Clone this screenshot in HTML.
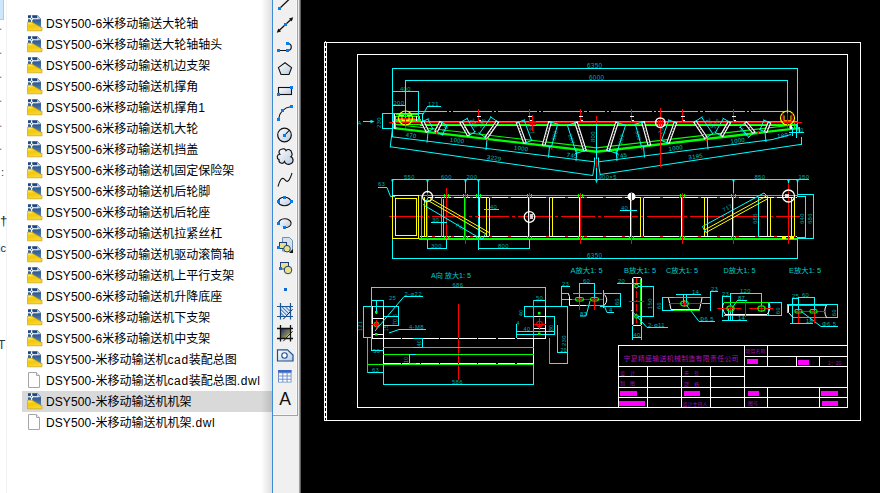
<!DOCTYPE html>
<html lang="zh-CN">
<head>
<meta charset="utf-8">
<title>DSY500</title>
<style>
html,body{margin:0;padding:0;}
body{width:880px;height:493px;overflow:hidden;background:#fff;position:relative;font-family:"Liberation Sans","Noto Sans CJK SC",sans-serif;}
#left{position:absolute;left:0;top:0;width:272px;height:493px;background:#fff;overflow:hidden;}
#navsel{position:absolute;left:0;top:0;width:3px;height:19px;background:#cce8ff;border-right:1px solid #99d1ff;border-bottom:1px solid #99d1ff;}
#navline{position:absolute;left:6px;top:0;width:1px;height:493px;background:#f2f2f2;}
.row{position:absolute;left:22px;width:250px;height:21px;}
.row.sel{background:#d9d9d9;}
.row span{position:absolute;left:24px;top:1px;line-height:21px;font-size:12px;color:#000;white-space:nowrap;}
.row span i{font-style:normal;font-size:12px;letter-spacing:0.1px;}
.row span i.lc{letter-spacing:0.65px;}
.row svg{position:absolute;left:5px;top:2px;}
#shadow{position:absolute;left:261px;top:0;width:11px;height:493px;background:linear-gradient(to right,rgba(0,0,0,0),rgba(0,0,0,0.13));}
#tb{position:absolute;left:272px;top:0;width:29px;height:493px;background:#f0f0f0;}
#tb .bl{position:absolute;left:0;top:0;width:1px;height:493px;background:#3c8ad8;}
#tb .r0{position:absolute;left:24px;top:0;width:1px;height:415px;background:#f8f8f8;}
#tb .r1{position:absolute;left:25px;top:0;width:1px;height:416px;background:#a2a2a2;}
#tb .b0{position:absolute;left:1px;top:414px;width:24px;height:1px;background:#f8f8f8;}
#tb .b1{position:absolute;left:1px;top:415px;width:25px;height:1px;background:#a2a2a2;}
#tb .r2{position:absolute;left:26px;top:0;width:1px;height:493px;background:#ececec;}
#tb .r3{position:absolute;left:27px;top:0;width:1px;height:493px;background:#a0a0a0;}
#tb .r4{position:absolute;left:28px;top:0;width:1px;height:493px;background:#606060;}
#cad{position:absolute;left:301px;top:0;width:579px;height:493px;background:#000;}
#cadsvg{position:absolute;left:0;top:0;pointer-events:none;}
.nt{position:absolute;left:0;font-size:12px;color:#444;line-height:12px;white-space:nowrap;}
</style>
</head>
<body>
<div id="left">
<div id="navsel"></div>
<div id="navline"></div>
<span class="nt" style="left:-1px;top:19.5px;color:#777">.</span>
<span class="nt" style="left:-1px;top:44.0px;color:#777">.</span>
<span class="nt" style="left:-1px;top:68.0px;color:#777">.</span>
<span class="nt" style="left:-1px;top:92.0px;color:#777">.</span>
<span class="nt" style="left:-1px;top:116.5px;color:#777">.</span>
<span class="nt" style="left:-1px;top:139.5px;color:#777">.</span>
<span class="nt" style="left:1px;top:166px;color:#333;font-size:11px">:</span>
<span class="nt" style="left:0px;top:215px;color:#222;font-size:13px">†</span>
<span class="nt" style="left:-2px;top:242px;color:#224;font-size:11px">ic</span>
<span class="nt" style="left:-2px;top:339px;color:#333;font-size:12px">T</span>
<svg width="0" height="0" style="position:absolute"><defs><linearGradient id="pg" x1="0" y1="0" x2="0" y2="1"><stop offset="0" stop-color="#173f78"/><stop offset="1" stop-color="#5c88bb"/></linearGradient><linearGradient id="fg" x1="0" y1="0" x2="0.3" y2="1"><stop offset="0" stop-color="#fbe24a"/><stop offset="0.5" stop-color="#f2c80a"/><stop offset="1" stop-color="#f7d634"/></linearGradient></defs></svg>
<div class="row" style="top:13px"><svg width="16" height="17" viewBox="0 0 16 17"><path d="M1 0.2H10.5L14 3.8V13H1Z" fill="url(#pg)"/><path d="M10.2 0.2L14 4.2H10.2Z" fill="#b9cde0"/><path d="M1 3.2H10.8V4.3H1Z" fill="#fff"/><path d="M4 0.2H5.2V7.5H4Z" fill="#fff"/><circle cx="4.600" cy="3.700" r="1.500" fill="#fff"/><circle cx="4.600" cy="3.700" r="0.600" fill="#24508a"/><path d="M0.3 7.2H5L13.6 12.2H15V15.8H0.3Z" fill="url(#fg)" stroke="#cfa106" stroke-width="0.7"/><path d="M1 8.2H4.5" stroke="#fdf0a0" stroke-width="0.8"/></svg><span><i>DSY500-6</i>米移动输送大轮轴</span></div>
<div class="row" style="top:34px"><svg width="16" height="17" viewBox="0 0 16 17"><path d="M1 0.2H10.5L14 3.8V13H1Z" fill="url(#pg)"/><path d="M10.2 0.2L14 4.2H10.2Z" fill="#b9cde0"/><path d="M1 3.2H10.8V4.3H1Z" fill="#fff"/><path d="M4 0.2H5.2V7.5H4Z" fill="#fff"/><circle cx="4.600" cy="3.700" r="1.500" fill="#fff"/><circle cx="4.600" cy="3.700" r="0.600" fill="#24508a"/><path d="M0.3 7.2H5L13.6 12.2H15V15.8H0.3Z" fill="url(#fg)" stroke="#cfa106" stroke-width="0.7"/><path d="M1 8.2H4.5" stroke="#fdf0a0" stroke-width="0.8"/></svg><span><i>DSY500-6</i>米移动输送大轮轴轴头</span></div>
<div class="row" style="top:55px"><svg width="16" height="17" viewBox="0 0 16 17"><path d="M1 0.2H10.5L14 3.8V13H1Z" fill="url(#pg)"/><path d="M10.2 0.2L14 4.2H10.2Z" fill="#b9cde0"/><path d="M1 3.2H10.8V4.3H1Z" fill="#fff"/><path d="M4 0.2H5.2V7.5H4Z" fill="#fff"/><circle cx="4.600" cy="3.700" r="1.500" fill="#fff"/><circle cx="4.600" cy="3.700" r="0.600" fill="#24508a"/><path d="M0.3 7.2H5L13.6 12.2H15V15.8H0.3Z" fill="url(#fg)" stroke="#cfa106" stroke-width="0.7"/><path d="M1 8.2H4.5" stroke="#fdf0a0" stroke-width="0.8"/></svg><span><i>DSY500-6</i>米移动输送机边支架</span></div>
<div class="row" style="top:76px"><svg width="16" height="17" viewBox="0 0 16 17"><path d="M1 0.2H10.5L14 3.8V13H1Z" fill="url(#pg)"/><path d="M10.2 0.2L14 4.2H10.2Z" fill="#b9cde0"/><path d="M1 3.2H10.8V4.3H1Z" fill="#fff"/><path d="M4 0.2H5.2V7.5H4Z" fill="#fff"/><circle cx="4.600" cy="3.700" r="1.500" fill="#fff"/><circle cx="4.600" cy="3.700" r="0.600" fill="#24508a"/><path d="M0.3 7.2H5L13.6 12.2H15V15.8H0.3Z" fill="url(#fg)" stroke="#cfa106" stroke-width="0.7"/><path d="M1 8.2H4.5" stroke="#fdf0a0" stroke-width="0.8"/></svg><span><i>DSY500-6</i>米移动输送机撑角</span></div>
<div class="row" style="top:97px"><svg width="16" height="17" viewBox="0 0 16 17"><path d="M1 0.2H10.5L14 3.8V13H1Z" fill="url(#pg)"/><path d="M10.2 0.2L14 4.2H10.2Z" fill="#b9cde0"/><path d="M1 3.2H10.8V4.3H1Z" fill="#fff"/><path d="M4 0.2H5.2V7.5H4Z" fill="#fff"/><circle cx="4.600" cy="3.700" r="1.500" fill="#fff"/><circle cx="4.600" cy="3.700" r="0.600" fill="#24508a"/><path d="M0.3 7.2H5L13.6 12.2H15V15.8H0.3Z" fill="url(#fg)" stroke="#cfa106" stroke-width="0.7"/><path d="M1 8.2H4.5" stroke="#fdf0a0" stroke-width="0.8"/></svg><span><i>DSY500-6</i>米移动输送机撑角<i>1</i></span></div>
<div class="row" style="top:118px"><svg width="16" height="17" viewBox="0 0 16 17"><path d="M1 0.2H10.5L14 3.8V13H1Z" fill="url(#pg)"/><path d="M10.2 0.2L14 4.2H10.2Z" fill="#b9cde0"/><path d="M1 3.2H10.8V4.3H1Z" fill="#fff"/><path d="M4 0.2H5.2V7.5H4Z" fill="#fff"/><circle cx="4.600" cy="3.700" r="1.500" fill="#fff"/><circle cx="4.600" cy="3.700" r="0.600" fill="#24508a"/><path d="M0.3 7.2H5L13.6 12.2H15V15.8H0.3Z" fill="url(#fg)" stroke="#cfa106" stroke-width="0.7"/><path d="M1 8.2H4.5" stroke="#fdf0a0" stroke-width="0.8"/></svg><span><i>DSY500-6</i>米移动输送机大轮</span></div>
<div class="row" style="top:139px"><svg width="16" height="17" viewBox="0 0 16 17"><path d="M1 0.2H10.5L14 3.8V13H1Z" fill="url(#pg)"/><path d="M10.2 0.2L14 4.2H10.2Z" fill="#b9cde0"/><path d="M1 3.2H10.8V4.3H1Z" fill="#fff"/><path d="M4 0.2H5.2V7.5H4Z" fill="#fff"/><circle cx="4.600" cy="3.700" r="1.500" fill="#fff"/><circle cx="4.600" cy="3.700" r="0.600" fill="#24508a"/><path d="M0.3 7.2H5L13.6 12.2H15V15.8H0.3Z" fill="url(#fg)" stroke="#cfa106" stroke-width="0.7"/><path d="M1 8.2H4.5" stroke="#fdf0a0" stroke-width="0.8"/></svg><span><i>DSY500-6</i>米移动输送机挡盖</span></div>
<div class="row" style="top:160px"><svg width="16" height="17" viewBox="0 0 16 17"><path d="M1 0.2H10.5L14 3.8V13H1Z" fill="url(#pg)"/><path d="M10.2 0.2L14 4.2H10.2Z" fill="#b9cde0"/><path d="M1 3.2H10.8V4.3H1Z" fill="#fff"/><path d="M4 0.2H5.2V7.5H4Z" fill="#fff"/><circle cx="4.600" cy="3.700" r="1.500" fill="#fff"/><circle cx="4.600" cy="3.700" r="0.600" fill="#24508a"/><path d="M0.3 7.2H5L13.6 12.2H15V15.8H0.3Z" fill="url(#fg)" stroke="#cfa106" stroke-width="0.7"/><path d="M1 8.2H4.5" stroke="#fdf0a0" stroke-width="0.8"/></svg><span><i>DSY500-6</i>米移动输送机固定保险架</span></div>
<div class="row" style="top:181px"><svg width="16" height="17" viewBox="0 0 16 17"><path d="M1 0.2H10.5L14 3.8V13H1Z" fill="url(#pg)"/><path d="M10.2 0.2L14 4.2H10.2Z" fill="#b9cde0"/><path d="M1 3.2H10.8V4.3H1Z" fill="#fff"/><path d="M4 0.2H5.2V7.5H4Z" fill="#fff"/><circle cx="4.600" cy="3.700" r="1.500" fill="#fff"/><circle cx="4.600" cy="3.700" r="0.600" fill="#24508a"/><path d="M0.3 7.2H5L13.6 12.2H15V15.8H0.3Z" fill="url(#fg)" stroke="#cfa106" stroke-width="0.7"/><path d="M1 8.2H4.5" stroke="#fdf0a0" stroke-width="0.8"/></svg><span><i>DSY500-6</i>米移动输送机后轮脚</span></div>
<div class="row" style="top:202px"><svg width="16" height="17" viewBox="0 0 16 17"><path d="M1 0.2H10.5L14 3.8V13H1Z" fill="url(#pg)"/><path d="M10.2 0.2L14 4.2H10.2Z" fill="#b9cde0"/><path d="M1 3.2H10.8V4.3H1Z" fill="#fff"/><path d="M4 0.2H5.2V7.5H4Z" fill="#fff"/><circle cx="4.600" cy="3.700" r="1.500" fill="#fff"/><circle cx="4.600" cy="3.700" r="0.600" fill="#24508a"/><path d="M0.3 7.2H5L13.6 12.2H15V15.8H0.3Z" fill="url(#fg)" stroke="#cfa106" stroke-width="0.7"/><path d="M1 8.2H4.5" stroke="#fdf0a0" stroke-width="0.8"/></svg><span><i>DSY500-6</i>米移动输送机后轮座</span></div>
<div class="row" style="top:223px"><svg width="16" height="17" viewBox="0 0 16 17"><path d="M1 0.2H10.5L14 3.8V13H1Z" fill="url(#pg)"/><path d="M10.2 0.2L14 4.2H10.2Z" fill="#b9cde0"/><path d="M1 3.2H10.8V4.3H1Z" fill="#fff"/><path d="M4 0.2H5.2V7.5H4Z" fill="#fff"/><circle cx="4.600" cy="3.700" r="1.500" fill="#fff"/><circle cx="4.600" cy="3.700" r="0.600" fill="#24508a"/><path d="M0.3 7.2H5L13.6 12.2H15V15.8H0.3Z" fill="url(#fg)" stroke="#cfa106" stroke-width="0.7"/><path d="M1 8.2H4.5" stroke="#fdf0a0" stroke-width="0.8"/></svg><span><i>DSY500-6</i>米移动输送机拉紧丝杠</span></div>
<div class="row" style="top:244px"><svg width="16" height="17" viewBox="0 0 16 17"><path d="M1 0.2H10.5L14 3.8V13H1Z" fill="url(#pg)"/><path d="M10.2 0.2L14 4.2H10.2Z" fill="#b9cde0"/><path d="M1 3.2H10.8V4.3H1Z" fill="#fff"/><path d="M4 0.2H5.2V7.5H4Z" fill="#fff"/><circle cx="4.600" cy="3.700" r="1.500" fill="#fff"/><circle cx="4.600" cy="3.700" r="0.600" fill="#24508a"/><path d="M0.3 7.2H5L13.6 12.2H15V15.8H0.3Z" fill="url(#fg)" stroke="#cfa106" stroke-width="0.7"/><path d="M1 8.2H4.5" stroke="#fdf0a0" stroke-width="0.8"/></svg><span><i>DSY500-6</i>米移动输送机驱动滚筒轴</span></div>
<div class="row" style="top:265px"><svg width="16" height="17" viewBox="0 0 16 17"><path d="M1 0.2H10.5L14 3.8V13H1Z" fill="url(#pg)"/><path d="M10.2 0.2L14 4.2H10.2Z" fill="#b9cde0"/><path d="M1 3.2H10.8V4.3H1Z" fill="#fff"/><path d="M4 0.2H5.2V7.5H4Z" fill="#fff"/><circle cx="4.600" cy="3.700" r="1.500" fill="#fff"/><circle cx="4.600" cy="3.700" r="0.600" fill="#24508a"/><path d="M0.3 7.2H5L13.6 12.2H15V15.8H0.3Z" fill="url(#fg)" stroke="#cfa106" stroke-width="0.7"/><path d="M1 8.2H4.5" stroke="#fdf0a0" stroke-width="0.8"/></svg><span><i>DSY500-6</i>米移动输送机上平行支架</span></div>
<div class="row" style="top:286px"><svg width="16" height="17" viewBox="0 0 16 17"><path d="M1 0.2H10.5L14 3.8V13H1Z" fill="url(#pg)"/><path d="M10.2 0.2L14 4.2H10.2Z" fill="#b9cde0"/><path d="M1 3.2H10.8V4.3H1Z" fill="#fff"/><path d="M4 0.2H5.2V7.5H4Z" fill="#fff"/><circle cx="4.600" cy="3.700" r="1.500" fill="#fff"/><circle cx="4.600" cy="3.700" r="0.600" fill="#24508a"/><path d="M0.3 7.2H5L13.6 12.2H15V15.8H0.3Z" fill="url(#fg)" stroke="#cfa106" stroke-width="0.7"/><path d="M1 8.2H4.5" stroke="#fdf0a0" stroke-width="0.8"/></svg><span><i>DSY500-6</i>米移动输送机升降底座</span></div>
<div class="row" style="top:307px"><svg width="16" height="17" viewBox="0 0 16 17"><path d="M1 0.2H10.5L14 3.8V13H1Z" fill="url(#pg)"/><path d="M10.2 0.2L14 4.2H10.2Z" fill="#b9cde0"/><path d="M1 3.2H10.8V4.3H1Z" fill="#fff"/><path d="M4 0.2H5.2V7.5H4Z" fill="#fff"/><circle cx="4.600" cy="3.700" r="1.500" fill="#fff"/><circle cx="4.600" cy="3.700" r="0.600" fill="#24508a"/><path d="M0.3 7.2H5L13.6 12.2H15V15.8H0.3Z" fill="url(#fg)" stroke="#cfa106" stroke-width="0.7"/><path d="M1 8.2H4.5" stroke="#fdf0a0" stroke-width="0.8"/></svg><span><i>DSY500-6</i>米移动输送机下支架</span></div>
<div class="row" style="top:328px"><svg width="16" height="17" viewBox="0 0 16 17"><path d="M1 0.2H10.5L14 3.8V13H1Z" fill="url(#pg)"/><path d="M10.2 0.2L14 4.2H10.2Z" fill="#b9cde0"/><path d="M1 3.2H10.8V4.3H1Z" fill="#fff"/><path d="M4 0.2H5.2V7.5H4Z" fill="#fff"/><circle cx="4.600" cy="3.700" r="1.500" fill="#fff"/><circle cx="4.600" cy="3.700" r="0.600" fill="#24508a"/><path d="M0.3 7.2H5L13.6 12.2H15V15.8H0.3Z" fill="url(#fg)" stroke="#cfa106" stroke-width="0.7"/><path d="M1 8.2H4.5" stroke="#fdf0a0" stroke-width="0.8"/></svg><span><i>DSY500-6</i>米移动输送机中支架</span></div>
<div class="row" style="top:349px"><svg width="16" height="17" viewBox="0 0 16 17"><path d="M1 0.2H10.5L14 3.8V13H1Z" fill="url(#pg)"/><path d="M10.2 0.2L14 4.2H10.2Z" fill="#b9cde0"/><path d="M1 3.2H10.8V4.3H1Z" fill="#fff"/><path d="M4 0.2H5.2V7.5H4Z" fill="#fff"/><circle cx="4.600" cy="3.700" r="1.500" fill="#fff"/><circle cx="4.600" cy="3.700" r="0.600" fill="#24508a"/><path d="M0.3 7.2H5L13.6 12.2H15V15.8H0.3Z" fill="url(#fg)" stroke="#cfa106" stroke-width="0.7"/><path d="M1 8.2H4.5" stroke="#fdf0a0" stroke-width="0.8"/></svg><span><i>DSY500-</i>米移动输送机<i class="lc">cad</i>装配总图</span></div>
<div class="row" style="top:370px"><svg width="16" height="17" viewBox="0 0 16 17"><path d="M1.5 0.5H9.5L12.5 3.5V15.5H1.5Z" fill="#fdfdfd" stroke="#a6a6a6" stroke-width="1"/><path d="M9.5 0.5V3.5H12.5" fill="#f0f0f0" stroke="#a6a6a6" stroke-width="1"/></svg><span><i>DSY500-</i>米移动输送机<i class="lc">cad</i>装配总图<i class="lc">.dwl</i></span></div>
<div class="row sel" style="top:391px"><svg width="16" height="17" viewBox="0 0 16 17"><path d="M1 0.2H10.5L14 3.8V13H1Z" fill="url(#pg)"/><path d="M10.2 0.2L14 4.2H10.2Z" fill="#b9cde0"/><path d="M1 3.2H10.8V4.3H1Z" fill="#fff"/><path d="M4 0.2H5.2V7.5H4Z" fill="#fff"/><circle cx="4.600" cy="3.700" r="1.500" fill="#fff"/><circle cx="4.600" cy="3.700" r="0.600" fill="#24508a"/><path d="M0.3 7.2H5L13.6 12.2H15V15.8H0.3Z" fill="url(#fg)" stroke="#cfa106" stroke-width="0.7"/><path d="M1 8.2H4.5" stroke="#fdf0a0" stroke-width="0.8"/></svg><span><i>DSY500-</i>米移动输送机机架</span></div>
<div class="row" style="top:412px"><svg width="16" height="17" viewBox="0 0 16 17"><path d="M1.5 0.5H9.5L12.5 3.5V15.5H1.5Z" fill="#fdfdfd" stroke="#a6a6a6" stroke-width="1"/><path d="M9.5 0.5V3.5H12.5" fill="#f0f0f0" stroke="#a6a6a6" stroke-width="1"/></svg><span><i>DSY500-</i>米移动输送机机架<i class="lc">.dwl</i></span></div>
<div id="shadow"></div>
</div>
<div id="tb"><div class="bl"></div><div class="r0"></div><div class="r1"></div><div class="r2"></div><div class="r3"></div><div class="r4"></div><div class="b0"></div><div class="b1"></div>
<svg width="29" height="493" viewBox="272 0 29 493" style="position:absolute;left:0;top:0">
<defs>
<linearGradient id="lg1" x1="0" y1="0" x2="1" y2="1"><stop offset="0" stop-color="#ffffff"/><stop offset="1" stop-color="#b8cbe0"/></linearGradient>
<linearGradient id="lg2" x1="0" y1="0" x2="1" y2="1"><stop offset="0" stop-color="#1d2f78"/><stop offset="1" stop-color="#c9bb3c"/></linearGradient>
<pattern id="hat" width="2.600" height="3" patternUnits="userSpaceOnUse" patternTransform="rotate(-45)"><rect width="3" height="3" fill="#fff"/><rect width="1.200" height="3" fill="#3f7cc4"/></pattern>
</defs>
<g fill="#0a78e6" id="sq"></g>
<!-- line -->
<path d="M279.5 8.5L289.5 -1" stroke="#111" stroke-width="1.3" fill="none"/>
<rect x="278" y="7" width="3" height="3" fill="#0b7ae8"/>
<!-- xline -->
<path d="M278 31.5L292 18.5" stroke="#111" stroke-width="1.3" fill="none"/>
<path d="M276.8 32.8L278.3 28.6L281 31.4Z M293.2 17.2L291.7 21.4L289 18.6Z" fill="#111"/>
<rect x="284" y="23" width="3" height="3" fill="#0b7ae8"/>
<!-- polyline -->
<path d="M278.5 50.5H287.5C292.5 50.5 292.5 43.5 287.5 43.5" stroke="#111" stroke-width="1.2" fill="none"/>
<rect x="277" y="49" width="3" height="3" fill="#0b7ae8"/><rect x="286" y="49" width="3" height="3" fill="#0b7ae8"/><rect x="286" y="42" width="3" height="3" fill="#0b7ae8"/>
<!-- pentagon -->
<path d="M285 62.7L291.6 67.6L289 74.5H281L278.4 67.6Z" fill="url(#lg1)" stroke="#111" stroke-width="1.1"/>
<!-- rect -->
<rect x="278.5" y="87.5" width="13" height="7" fill="url(#lg1)" stroke="#111" stroke-width="1.1"/>
<rect x="290" y="86" width="3" height="3" fill="#0b7ae8"/><rect x="277" y="93" width="3" height="3" fill="#0b7ae8"/>
<!-- arc -->
<path d="M278.5 119.5C279.5 112 284 107.5 291.5 106.5" stroke="#111" stroke-width="1.2" fill="none"/>
<rect x="277" y="118" width="3" height="3" fill="#0b7ae8"/><rect x="281" y="109" width="3" height="3" fill="#0b7ae8"/><rect x="290" y="105" width="3" height="3" fill="#0b7ae8"/>
<!-- circle -->
<circle cx="284.5" cy="135" r="6.8" fill="url(#lg1)" stroke="#111" stroke-width="1.2"/>
<path d="M284.5 135.5L289.5 130" stroke="#111" stroke-width="1.1"/>
<rect x="283" y="134" width="3" height="3" fill="#0b7ae8"/>
<!-- cloud -->
<path d="M279.8 154.2A2.900 2.900 0 0 1 281.500 149.300A3 3 0 0 1 286 150.600A3.200 3.200 0 0 1 291.600 152.600A3 3 0 0 1 290.800 156.800A3.800 3.800 0 0 1 290 164A3.800 3.800 0 0 1 284.600 161.600A3 3 0 0 1 279 159.600A2.800 2.800 0 0 1 279.800 154.200Z" fill="url(#lg1)" stroke="#111" stroke-width="1.15"/>
<!-- spline -->
<path d="M278 186.5C279.5 181 281.5 177.500 283.500 178.500C285.500 179.500 286 182.500 288 181C290 179.500 291 176 292 173" stroke="#111" stroke-width="1.1" fill="none"/>
<!-- ellipse -->
<ellipse cx="284.5" cy="201.500" rx="6.3" ry="4.3" fill="url(#lg1)" stroke="#111" stroke-width="1.1"/>
<rect x="283" y="196" width="3" height="3" fill="#0b7ae8"/><rect x="277" y="200" width="3" height="3" fill="#0b7ae8"/><rect x="290" y="200" width="3" height="3" fill="#0b7ae8"/>
<!-- ellipse arc -->
<ellipse cx="284.5" cy="223.3" rx="6" ry="4.3" fill="url(#lg1)"/>
<path d="M278.5 223.5A6.300 4.500 0 1 1 285 227.800" stroke="#111" stroke-width="1.1" fill="none"/>
<rect x="277" y="222" width="3" height="3" fill="#0b7ae8"/><rect x="283" y="226" width="3" height="3" fill="#0b7ae8"/>
<!-- insert block -->
<path d="M282.500 237.500H289.500L292.500 240.500V251H282.500Z" fill="#d5e2ec" stroke="#6d8fb3" stroke-width="1"/>
<rect x="279.500" y="242.500" width="7" height="6" fill="#e9e188" stroke="#1f3f7a" stroke-width="1"/>
<circle cx="287" cy="248.700" r="3.300" fill="#e9e188" stroke="#1f3f7a" stroke-width="1"/>
<rect x="277" y="246" width="3" height="3" fill="#0b7ae8"/>
<path d="M293 249V253H289Z" fill="#111"/>
<!-- make block -->
<rect x="280.500" y="262.500" width="8" height="6.500" fill="#e9e188" stroke="#1f3f7a" stroke-width="1"/>
<circle cx="288" cy="270" r="3.800" fill="#e9e188" stroke="#1f3f7a" stroke-width="1"/>
<rect x="279" y="267" width="3" height="3" fill="#0b7ae8"/>
<!-- point -->
<rect x="284" y="288" width="3" height="3" fill="#0b6ad8"/>
<!-- hatch -->
<path d="M281 306.500H290.500V310.500L284.500 317H281Z" fill="url(#hat)"/>
<path d="M283.300 319.200L292.500 309.300" stroke="#111" stroke-width="1"/>
<path d="M277 306.500H293M277 316.500H293M280.500 303V319.500M290.500 303V319.500" stroke="#1c5596" stroke-width="1.2" fill="none"/>
<!-- gradient -->
<path d="M281 328.500H290.500V332.500L284.500 339H281Z" fill="url(#lg2)"/>
<path d="M283.300 341.200L292.500 331.300" stroke="#111" stroke-width="1"/>
<path d="M277 328.500H293M277 338.500H293M280.500 325V341.500M290.500 325V341.500" stroke="#111" stroke-width="1.3" fill="none"/>
<!-- region -->
<path d="M277.500 349.800H287.500L293 355V361H277.500Z" fill="url(#lg1)" stroke="#1f4f92" stroke-width="1.2"/>
<circle cx="284.500" cy="355.500" r="2.700" fill="#fff" stroke="#1f4f92" stroke-width="1.1"/>
<!-- table -->
<rect x="278" y="370" width="13.500" height="12.500" fill="#6f8fc8"/>
<rect x="278" y="370" width="13.500" height="2.300" fill="#3a68c8"/>
<g fill="#fff"><rect x="279" y="373.300" width="3.300" height="2.200"/><rect x="283.300" y="373.300" width="3.300" height="2.200"/><rect x="287.600" y="373.300" width="3" height="2.200"/><rect x="279" y="376.500" width="3.300" height="2.200"/><rect x="283.300" y="376.500" width="3.300" height="2.200"/><rect x="287.600" y="376.500" width="3" height="2.200"/><rect x="279" y="379.700" width="3.300" height="2"/><rect x="283.300" y="379.700" width="3.300" height="2"/><rect x="287.600" y="379.700" width="3" height="2"/></g>
<!-- A -->
<text x="285.200" y="405" font-family="Liberation Sans,sans-serif" font-size="17.500" text-anchor="middle" fill="#111">A</text>
</svg>

</div>
<div id="cad"></div>
<svg id="cadsvg" width="880" height="493" viewBox="0 0 880 493">
<rect x="324" y="42" width="3" height="379" fill="#fff"/>
<path d="M325.5 43V420" stroke="#000" stroke-width="1" stroke-dasharray="3 2" shape-rendering="crispEdges"/>
<rect x="325" y="41" width="1" height="1" fill="#ddd"/>
<path d="M326 42.5H861M860.5 42V421M324 420.5H861" stroke="#ffffff" stroke-width="1" fill="none" shape-rendering="crispEdges"/>
<rect x="357.5" y="54.5" width="490" height="353" fill="none" stroke="#fff" stroke-width="1" shape-rendering="crispEdges"/>
<path d="M392 68.5H798M392.5 68V137M797.5 68V129M405 80.5H788M405.5 80V128M787.5 80V118M392 91.5H419M418.5 91V123M392 105.5H406" stroke="#00ffff" stroke-width="1" fill="none" shape-rendering="crispEdges"/>
<text x="587" y="68" fill="#00ffff" font-size="6.3" text-anchor="start" fill-opacity="0.66" letter-spacing="0.35" font-family="'Liberation Sans','Noto Sans CJK SC',sans-serif">6350</text>
<text x="589" y="80" fill="#00ffff" font-size="6.3" text-anchor="start" fill-opacity="0.66" letter-spacing="0.35" font-family="'Liberation Sans','Noto Sans CJK SC',sans-serif">6000</text>
<text x="400" y="91" fill="#00ffff" font-size="5.88" text-anchor="start" fill-opacity="0.66" letter-spacing="0.35" font-family="'Liberation Sans','Noto Sans CJK SC',sans-serif">400</text>
<text x="393.5" y="105" fill="#00ffff" font-size="5.88" text-anchor="start" fill-opacity="0.66" letter-spacing="0.35" font-family="'Liberation Sans','Noto Sans CJK SC',sans-serif">200</text>
<text x="428" y="106" fill="#00ffff" font-size="5.88" text-anchor="start" fill-opacity="0.66" letter-spacing="0.35" font-family="'Liberation Sans','Noto Sans CJK SC',sans-serif">121</text>
<path d="M427 106.5H441" stroke="#00ffff" stroke-width="1" fill="none" shape-rendering="crispEdges"/>
<path d="M427.5 106.5L422.3 115.5" stroke="#00ffff" stroke-width="1" fill="none"/>
<path d="M407.500 111.5H596.500" stroke="#00ffff" stroke-width="1" stroke-dasharray="39 2 2.300 2" stroke-dashoffset="0" shape-rendering="crispEdges"/>
<path d="M596.500 111.5H785" stroke="#00ffff" stroke-width="1" stroke-dasharray="40.400 2 2.300 2" stroke-dashoffset="32.050" shape-rendering="crispEdges"/>
<text x="357.5" y="125" fill="#00ffff" font-size="5.88" text-anchor="start" fill-opacity="0.66" letter-spacing="0.35" font-family="'Liberation Sans','Noto Sans CJK SC',sans-serif">A</text>
<path d="M363 121.5H373" stroke="#00ffff" stroke-width="1" fill="none" shape-rendering="crispEdges"/>
<path d="M370.500 119.800L374.500 121.500L370.500 123.200Z" fill="#00ffff"/>
<path d="M382.5 113V129M382 113.5H423M382 128.5H393" stroke="#00ffff" stroke-width="1" fill="none" shape-rendering="crispEdges"/>
<text x="381" y="128" fill="#00ffff" font-size="5.88" text-anchor="start" fill-opacity="0.66" letter-spacing="0.35" font-family="'Liberation Sans','Noto Sans CJK SC',sans-serif" transform="rotate(-90 381 128)">230</text>
<path d="M422.5 113V122M395.5 116V127M395 116.5H420M419.5 116V123M416.5 116V122" stroke="#00ffff" stroke-width="1" fill="none" shape-rendering="crispEdges"/>
<path d="M396 114.5H418M396 116.5H419M394 119.5H421M394 120.5H421" stroke="#00ff00" stroke-width="1" fill="none" shape-rendering="crispEdges"/>
<path d="M397 118.5H415" stroke="#ff0000" stroke-width="1" fill="none" shape-rendering="crispEdges"/>
<path d="M399 115.5H404M407 115.5H412M416.5 116V121" stroke="#ffffff" stroke-width="1" fill="none" shape-rendering="crispEdges"/>
<path d="M393 121.5H798" stroke="#00ff00" stroke-width="1" fill="none" shape-rendering="crispEdges"/>
<path d="M396 124.5H798" stroke="#00ff00" stroke-width="1" fill="none" shape-rendering="crispEdges"/>
<path d="M420 125.5H796" stroke="#00ffff" stroke-width="1" fill="none" shape-rendering="crispEdges"/>
<path d="M389 122.500H802" stroke="#ff0000" stroke-width="1" shape-rendering="crispEdges"/>
<path d="M389 123.200H802" stroke="#ff0000" stroke-width="0.600" stroke-opacity="0.500"/>
<circle cx="405.5" cy="118" r="7" fill="none" stroke="#ffff00" stroke-width="1.200"/>
<path d="M402.0 115.500V120.500H409.0V115.500" fill="none" stroke="#ffff00" stroke-width="1"/>
<circle cx="787.5" cy="118" r="7" fill="none" stroke="#ffff00" stroke-width="1.200"/>
<path d="M784.0 115.500V120.500H791.0V115.500" fill="none" stroke="#ffff00" stroke-width="1"/>
<path d="M405.5 119V130" stroke="#ff0000" stroke-width="1" fill="none" shape-rendering="crispEdges"/>
<path d="M787.5 113V128" stroke="#ff0000" stroke-width="1" fill="none" shape-rendering="crispEdges"/>
<path d="M783 113V121H792V113" fill="none" stroke="#ff0000" stroke-width="1"/>
<path d="M396 124.5L596.5 147.8L797 124.5" stroke="#00ff00" stroke-width="1.200" fill="none"/>
<path d="M394 128.1L596.5 151.70000000000002L799 128.1" stroke="#00ff00" stroke-width="2.400" fill="none"/>
<path d="M392 136.8L594.5 161.8M598.5 161.8L772 139.6" stroke="#00ffff" stroke-width="1" fill="none"/>
<path d="M390.5 146.8L593 175.5M600 174.5L801.5 144.3" stroke="#00ffff" stroke-width="1" fill="none"/>
<path d="M392.5 128L390.2 147.5M801.5 137L801.5 145" stroke="#00ffff" stroke-width="1" fill="none"/>
<path d="M596.5 124V180" stroke="#00ffff" stroke-width="1" fill="none" shape-rendering="crispEdges"/>
<path d="M596.5 116V124M596.5 158.5V168" stroke="#ff0000" stroke-width="1" fill="none" shape-rendering="crispEdges"/>
<path d="M594.5 157.5L594.5 164M594.5 164L592.8 175.5M598.5 157.5L598.5 164M598.5 164L600.2 175" stroke="#00ffff" stroke-width="1" fill="none"/>
<text x="595" y="142" fill="#00ffff" font-size="5.88" text-anchor="start" fill-opacity="0.66" letter-spacing="0.35" font-family="'Liberation Sans','Noto Sans CJK SC',sans-serif" transform="rotate(-90 595 142)">800</text>
<path d="M421.3 122.3L426.3 132.3L428.7 131.1L423.7 121.1Z" stroke="#ffffff" stroke-width="1.150" fill="#000" stroke-linejoin="miter"/>
<path d="M422.5 121.7L427.5 131.7" stroke="#ffffff" stroke-width="1.400" stroke-opacity="0.550" stroke-dasharray="0.800 2.200" fill="none"/>
<path d="M439.8 121.4L434.8 131.1L437.2 132.3L442.2 122.6Z" stroke="#ffffff" stroke-width="1.150" fill="#000" stroke-linejoin="miter"/>
<path d="M441 122L436 131.7" stroke="#ffffff" stroke-width="1.400" stroke-opacity="0.550" stroke-dasharray="0.800 2.200" fill="none"/>
<path d="M459.9 122.6L467.6 136.1L469.8 134.9L462.1 121.4Z" stroke="#ffffff" stroke-width="1.150" fill="#000" stroke-linejoin="miter"/>
<path d="M461 122L468.7 135.5" stroke="#ffffff" stroke-width="1.400" stroke-opacity="0.550" stroke-dasharray="0.800 2.200" fill="none"/>
<path d="M496.4 121.0L484.9 137.3L487.1 138.7L498.6 122.4Z" stroke="#ffffff" stroke-width="1.150" fill="#000" stroke-linejoin="miter"/>
<path d="M497.5 121.7L486 138" stroke="#ffffff" stroke-width="1.400" stroke-opacity="0.550" stroke-dasharray="0.800 2.200" fill="none"/>
<path d="M516.3 122.9L523.8 143.4L526.2 142.6L518.7 122.1Z" stroke="#ffffff" stroke-width="1.150" fill="#000" stroke-linejoin="miter"/>
<path d="M517.5 122.5L525 143" stroke="#ffffff" stroke-width="1.400" stroke-opacity="0.550" stroke-dasharray="0.800 2.200" fill="none"/>
<path d="M548.7 121.7L542.4 144.7L545.0 145.3L551.3 122.3Z" stroke="#ffffff" stroke-width="1.150" fill="#000" stroke-linejoin="miter"/>
<path d="M550 122L543.7 145" stroke="#ffffff" stroke-width="1.400" stroke-opacity="0.550" stroke-dasharray="0.800 2.200" fill="none"/>
<path d="M574.8 122.9L583.8 150.9L586.2 150.1L577.2 122.1Z" stroke="#ffffff" stroke-width="1.150" fill="#000" stroke-linejoin="miter"/>
<path d="M576 122.5L585 150.5" stroke="#ffffff" stroke-width="1.400" stroke-opacity="0.550" stroke-dasharray="0.800 2.200" fill="none"/>
<path d="M615.8 122.1L606.8 150.1L609.2 150.9L618.2 122.9Z" stroke="#ffffff" stroke-width="1.150" fill="#000" stroke-linejoin="miter"/>
<path d="M617 122.5L608 150.5" stroke="#ffffff" stroke-width="1.400" stroke-opacity="0.550" stroke-dasharray="0.800 2.200" fill="none"/>
<path d="M641.7 122.3L648.0 145.3L650.6 144.7L644.3 121.7Z" stroke="#ffffff" stroke-width="1.150" fill="#000" stroke-linejoin="miter"/>
<path d="M643 122L649.3 145" stroke="#ffffff" stroke-width="1.400" stroke-opacity="0.550" stroke-dasharray="0.800 2.200" fill="none"/>
<path d="M674.3 122.1L666.8 142.6L669.2 143.4L676.7 122.9Z" stroke="#ffffff" stroke-width="1.150" fill="#000" stroke-linejoin="miter"/>
<path d="M675.5 122.5L668 143" stroke="#ffffff" stroke-width="1.400" stroke-opacity="0.550" stroke-dasharray="0.800 2.200" fill="none"/>
<path d="M693.9 122.4L704.9 138.7L707.1 137.3L696.1 121.0Z" stroke="#ffffff" stroke-width="1.150" fill="#000" stroke-linejoin="miter"/>
<path d="M695 121.7L706 138" stroke="#ffffff" stroke-width="1.400" stroke-opacity="0.550" stroke-dasharray="0.800 2.200" fill="none"/>
<path d="M728.4 121.4L720.4 135.4L722.6 136.6L730.6 122.6Z" stroke="#ffffff" stroke-width="1.150" fill="#000" stroke-linejoin="miter"/>
<path d="M729.5 122L721.5 136" stroke="#ffffff" stroke-width="1.400" stroke-opacity="0.550" stroke-dasharray="0.800 2.200" fill="none"/>
<path d="M744.5 123.3L753.0 133.5L755.0 131.9L746.5 121.7Z" stroke="#ffffff" stroke-width="1.150" fill="#000" stroke-linejoin="miter"/>
<path d="M745.5 122.5L754 132.7" stroke="#ffffff" stroke-width="1.400" stroke-opacity="0.550" stroke-dasharray="0.800 2.200" fill="none"/>
<path d="M768.3 122.0L764.3 131.5L766.7 132.5L770.7 123.0Z" stroke="#ffffff" stroke-width="1.150" fill="#000" stroke-linejoin="miter"/>
<path d="M769.5 122.5L765.5 132" stroke="#ffffff" stroke-width="1.400" stroke-opacity="0.550" stroke-dasharray="0.800 2.200" fill="none"/>
<path d="M427.9 119.0L432.9 129.0M422.5 121.7L428.7 118.6M427.5 131.7L433.7 128.6" stroke="#00ffff" stroke-width="1" fill="none"/>
<path d="M447.2 125.2L442.2 134.9M441 122L448.2 125.7M436 131.7L443.2 135.4" stroke="#00ffff" stroke-width="1" fill="none"/>
<text x="446.3" y="130.9" fill="#00ffff" font-size="5.46" text-anchor="middle" fill-opacity="0.7" letter-spacing="0.35" font-family="'Liberation Sans','Noto Sans CJK SC',sans-serif" transform="rotate(-62.7 446.3 130.9)">198</text>
<path d="M467.1 118.5L474.8 132.0M461 122L468.0 118.0M468.7 135.5L475.7 131.5" stroke="#00ffff" stroke-width="1" fill="none"/>
<text x="472.5" y="124.4" fill="#00ffff" font-size="5.46" text-anchor="middle" fill-opacity="0.7" letter-spacing="0.35" font-family="'Liberation Sans','Noto Sans CJK SC',sans-serif" transform="rotate(60.3 472.5 124.4)">222</text>
<path d="M491.0 117.1L479.5 133.4M497.5 121.7L490.0 116.4M486 138L478.5 132.7" stroke="#00ffff" stroke-width="1" fill="none"/>
<text x="483.6" y="124.1" fill="#00ffff" font-size="5.46" text-anchor="middle" fill-opacity="0.7" letter-spacing="0.35" font-family="'Liberation Sans','Noto Sans CJK SC',sans-serif" transform="rotate(-54.8 483.6 124.1)">245</text>
<path d="M524.1 120.1L531.6 140.6M517.5 122.5L525.1 119.7M525 143L532.6 140.2" stroke="#00ffff" stroke-width="1" fill="none"/>
<text x="529.5" y="129.7" fill="#00ffff" font-size="5.46" text-anchor="middle" fill-opacity="0.7" letter-spacing="0.35" font-family="'Liberation Sans','Noto Sans CJK SC',sans-serif" transform="rotate(69.9 529.5 129.7)">267</text>
<path d="M557.7 124.1L551.4 147.1M550 122L558.9 124.4M543.7 145L552.6 147.4" stroke="#00ffff" stroke-width="1" fill="none"/>
<text x="556.5" y="136.1" fill="#00ffff" font-size="5.46" text-anchor="middle" fill-opacity="0.7" letter-spacing="0.35" font-family="'Liberation Sans','Noto Sans CJK SC',sans-serif" transform="rotate(-74.7 556.5 136.1)">300</text>
<path d="M567.4 125.3L576.4 153.3M576 122.5L566.1 125.7M585 150.5L575.1 153.7" stroke="#00ffff" stroke-width="1" fill="none"/>
<text x="569.8" y="139.9" fill="#00ffff" font-size="5.46" text-anchor="middle" fill-opacity="0.7" letter-spacing="0.35" font-family="'Liberation Sans','Noto Sans CJK SC',sans-serif" transform="rotate(72.2 569.8 139.9)">267</text>
<path d="M625.6 125.3L616.6 153.3M617 122.5L626.9 125.7M608 150.5L617.9 153.7" stroke="#00ffff" stroke-width="1" fill="none"/>
<text x="623.2" y="139.9" fill="#00ffff" font-size="5.46" text-anchor="middle" fill-opacity="0.7" letter-spacing="0.35" font-family="'Liberation Sans','Noto Sans CJK SC',sans-serif" transform="rotate(-72.2 623.2 139.9)">267</text>
<path d="M635.3 124.1L641.6 147.1M643 122L634.1 124.4M649.3 145L640.4 147.4" stroke="#00ffff" stroke-width="1" fill="none"/>
<text x="636.5" y="136.1" fill="#00ffff" font-size="5.46" text-anchor="middle" fill-opacity="0.7" letter-spacing="0.35" font-family="'Liberation Sans','Noto Sans CJK SC',sans-serif" transform="rotate(74.7 636.5 136.1)">300</text>
<path d="M668.9 120.1L661.4 140.6M675.5 122.5L667.9 119.7M668 143L660.4 140.2" stroke="#00ffff" stroke-width="1" fill="none"/>
<text x="663.5" y="129.7" fill="#00ffff" font-size="5.46" text-anchor="middle" fill-opacity="0.7" letter-spacing="0.35" font-family="'Liberation Sans','Noto Sans CJK SC',sans-serif" transform="rotate(-69.9 663.5 129.7)">267</text>
<path d="M701.6 117.2L712.6 133.5M695 121.7L702.6 116.6M706 138L713.6 132.9" stroke="#00ffff" stroke-width="1" fill="none"/>
<text x="708.8" y="124.3" fill="#00ffff" font-size="5.46" text-anchor="middle" fill-opacity="0.7" letter-spacing="0.35" font-family="'Liberation Sans','Noto Sans CJK SC',sans-serif" transform="rotate(56.0 708.8 124.3)">245</text>
<path d="M723.4 118.5L715.4 132.5M729.5 122L722.5 118.0M721.5 136L714.5 132.0" stroke="#00ffff" stroke-width="1" fill="none"/>
<text x="717.9" y="124.7" fill="#00ffff" font-size="5.46" text-anchor="middle" fill-opacity="0.7" letter-spacing="0.35" font-family="'Liberation Sans','Noto Sans CJK SC',sans-serif" transform="rotate(-60.3 717.9 124.7)">222</text>
<path d="M740.1 127.0L748.6 137.2M745.5 122.5L739.3 127.7M754 132.7L747.8 137.9" stroke="#00ffff" stroke-width="1" fill="none"/>
<text x="743.0" y="133.2" fill="#00ffff" font-size="5.46" text-anchor="middle" fill-opacity="0.7" letter-spacing="0.35" font-family="'Liberation Sans','Noto Sans CJK SC',sans-serif" transform="rotate(50.2 743.0 133.2)">198</text>
<path d="M764.0 120.2L760.0 129.7M769.5 122.5L763.1 119.8M765.5 132L759.1 129.3" stroke="#00ffff" stroke-width="1" fill="none"/>
<path d="M428 132.1L427 142.7" stroke="#00ffff" stroke-width="1" fill="none"/>
<path d="M487 138.9L486 150.0" stroke="#00ffff" stroke-width="1" fill="none"/>
<path d="M549.5 146.2L548.5 157.7" stroke="#00ffff" stroke-width="1" fill="none"/>
<path d="M577 149.4L576 161.1" stroke="#00ffff" stroke-width="1" fill="none"/>
<path d="M616 149.4L617 161.1" stroke="#00ffff" stroke-width="1" fill="none"/>
<path d="M643.5 146.2L644.5 157.5" stroke="#00ffff" stroke-width="1" fill="none"/>
<path d="M707 138.8L708 149.4" stroke="#00ffff" stroke-width="1" fill="none"/>
<path d="M765 132.1L766 142.0" stroke="#00ffff" stroke-width="1" fill="none"/>
<path d="M478.5 108.5V122" stroke="#ff0000" stroke-width="1" fill="none" shape-rendering="crispEdges"/>
<path d="M477.0 116.5H480.5M478.5 120.5H481.0" stroke="#ffffff" stroke-width="1" fill="none" shape-rendering="crispEdges"/>
<path d="M529.5 108.5V122" stroke="#ff0000" stroke-width="1" fill="none" shape-rendering="crispEdges"/>
<path d="M528.0 116.5H531.5M529.5 120.5H532.0" stroke="#ffffff" stroke-width="1" fill="none" shape-rendering="crispEdges"/>
<path d="M580.5 108.5V122" stroke="#ff0000" stroke-width="1" fill="none" shape-rendering="crispEdges"/>
<path d="M579.0 116.5H582.5M580.5 120.5H583.0" stroke="#ffffff" stroke-width="1" fill="none" shape-rendering="crispEdges"/>
<path d="M631.5 108.5V122" stroke="#ff0000" stroke-width="1" fill="none" shape-rendering="crispEdges"/>
<path d="M630.0 116.5H633.5M631.5 120.5H634.0" stroke="#ffffff" stroke-width="1" fill="none" shape-rendering="crispEdges"/>
<path d="M682.5 108.5V122" stroke="#ff0000" stroke-width="1" fill="none" shape-rendering="crispEdges"/>
<path d="M681.0 116.5H684.5M682.5 120.5H685.0" stroke="#ffffff" stroke-width="1" fill="none" shape-rendering="crispEdges"/>
<path d="M733.5 108.5V122" stroke="#ff0000" stroke-width="1" fill="none" shape-rendering="crispEdges"/>
<path d="M732.0 116.5H735.5M733.5 120.5H736.0" stroke="#ffffff" stroke-width="1" fill="none" shape-rendering="crispEdges"/>
<path d="M532.5 115V131M530 121.5H536M530 124.5H536" stroke="#ff0000" stroke-width="1" fill="none" shape-rendering="crispEdges"/>
<path d="M660.5 108V167" stroke="#ff0000" stroke-width="1" fill="none" shape-rendering="crispEdges"/>
<path d="M657 122.5H664M658.5 120V126M662.5 120V126" stroke="#ff0000" stroke-width="1" fill="none" shape-rendering="crispEdges"/>
<circle cx="660.3" cy="122.700" r="4.700" fill="none" stroke="#ffffff" stroke-width="1.500"/>
<rect x="486.5" y="138.5" width="1.500" height="2.500" fill="#ff0000"/>
<rect x="551" y="147" width="1.500" height="2.500" fill="#ff0000"/>
<rect x="641" y="147" width="1.500" height="2.500" fill="#ff0000"/>
<rect x="705.5" y="138.5" width="1.500" height="2.500" fill="#ff0000"/>
<rect x="757.5" y="131.5" width="1.500" height="2.500" fill="#ff0000"/>
<rect x="436" y="131.5" width="1.500" height="2.500" fill="#ff0000"/>
<text x="411" y="137.5" fill="#00ffff" font-size="5.88" text-anchor="middle" fill-opacity="0.8" letter-spacing="0.35" font-family="'Liberation Sans','Noto Sans CJK SC',sans-serif" transform="rotate(7 411 137.5)">470</text>
<text x="457" y="142.5" fill="#00ffff" font-size="5.88" text-anchor="middle" fill-opacity="0.8" letter-spacing="0.35" font-family="'Liberation Sans','Noto Sans CJK SC',sans-serif" transform="rotate(7 457 142.5)">1000</text>
<text x="521" y="150.5" fill="#00ffff" font-size="5.88" text-anchor="middle" fill-opacity="0.8" letter-spacing="0.35" font-family="'Liberation Sans','Noto Sans CJK SC',sans-serif" transform="rotate(7 521 150.5)">1000</text>
<text x="572" y="157.5" fill="#00ffff" font-size="5.88" text-anchor="middle" fill-opacity="0.8" letter-spacing="0.35" font-family="'Liberation Sans','Noto Sans CJK SC',sans-serif" transform="rotate(7 572 157.5)">745</text>
<text x="494" y="160" fill="#00ffff" font-size="5.88" text-anchor="middle" fill-opacity="0.8" letter-spacing="0.35" font-family="'Liberation Sans','Noto Sans CJK SC',sans-serif" transform="rotate(8 494 160)">3229</text>
<text x="622" y="157.5" fill="#00ffff" font-size="5.88" text-anchor="middle" fill-opacity="0.8" letter-spacing="0.35" font-family="'Liberation Sans','Noto Sans CJK SC',sans-serif" transform="rotate(-7 622 157.5)">745</text>
<text x="676" y="150" fill="#00ffff" font-size="5.88" text-anchor="middle" fill-opacity="0.8" letter-spacing="0.35" font-family="'Liberation Sans','Noto Sans CJK SC',sans-serif" transform="rotate(-7 676 150)">1000</text>
<text x="738" y="142.5" fill="#00ffff" font-size="5.88" text-anchor="middle" fill-opacity="0.8" letter-spacing="0.35" font-family="'Liberation Sans','Noto Sans CJK SC',sans-serif" transform="rotate(-7 738 142.5)">1000</text>
<text x="783" y="137.5" fill="#00ffff" font-size="5.88" text-anchor="middle" fill-opacity="0.8" letter-spacing="0.35" font-family="'Liberation Sans','Noto Sans CJK SC',sans-serif" transform="rotate(-7 783 137.5)">180</text>
<text x="696" y="158.5" fill="#00ffff" font-size="5.88" text-anchor="middle" fill-opacity="0.8" letter-spacing="0.35" font-family="'Liberation Sans','Noto Sans CJK SC',sans-serif" transform="rotate(-8.5 696 158.5)">3195</text>
<path d="M789 132.5H804M796.5 124V138M792.5 127V136M799.5 127V133" stroke="#00ffff" stroke-width="1" fill="none" shape-rendering="crispEdges"/>
<path d="M772 139.6L791 134.5" stroke="#00ffff" stroke-width="1" fill="none"/>
<text x="797" y="132" fill="#00ffff" font-size="5.04" text-anchor="start" fill-opacity="0.7" letter-spacing="0.35" font-family="'Liberation Sans','Noto Sans CJK SC',sans-serif">40</text>
<path d="M789.5 124V130M794.5 123V129" stroke="#00ff00" stroke-width="1" fill="none" shape-rendering="crispEdges"/>
<rect x="790" y="125" width="2" height="4" fill="#ffffff"/>
<rect x="393.500" y="114" width="1.600" height="14.500" fill="#ffffff"/><rect x="393.500" y="127.500" width="3" height="1.200" fill="#ffffff"/>
<path d="M392 179.5H809M392.5 179V196M427.5 179V193M465.5 179V197M478.5 179V250M733.5 179V196M788.5 179V192M797.5 179V196" stroke="#00ffff" stroke-width="1" fill="none" shape-rendering="crispEdges"/>
<path d="M391.0 179.500L392.5 183.500L394.0 179.500Z" fill="#00ffff" fill-opacity="0.900"/>
<path d="M426.0 179.500L427.5 183.500L429.0 179.500Z" fill="#00ffff" fill-opacity="0.900"/>
<path d="M464.0 179.500L465.5 183.500L467.0 179.500Z" fill="#00ffff" fill-opacity="0.900"/>
<path d="M477.0 179.500L478.5 183.500L480.0 179.500Z" fill="#00ffff" fill-opacity="0.900"/>
<path d="M732.0 179.500L733.5 183.500L735.0 179.500Z" fill="#00ffff" fill-opacity="0.900"/>
<path d="M787.0 179.500L788.5 183.500L790.0 179.500Z" fill="#00ffff" fill-opacity="0.900"/>
<path d="M796.0 179.500L797.5 183.500L799.0 179.500Z" fill="#00ffff" fill-opacity="0.900"/>
<path d="M595.0 179.500L596.5 183.500L598.0 179.500Z" fill="#00ffff" fill-opacity="0.900"/>
<text x="404" y="178.5" fill="#00ffff" font-size="5.88" text-anchor="start" fill-opacity="0.66" letter-spacing="0.35" font-family="'Liberation Sans','Noto Sans CJK SC',sans-serif">550</text>
<text x="441" y="178.5" fill="#00ffff" font-size="5.88" text-anchor="start" fill-opacity="0.66" letter-spacing="0.35" font-family="'Liberation Sans','Noto Sans CJK SC',sans-serif">600</text>
<text x="466.5" y="178.5" fill="#00ffff" font-size="5.88" text-anchor="start" fill-opacity="0.66" letter-spacing="0.35" font-family="'Liberation Sans','Noto Sans CJK SC',sans-serif">200</text>
<text x="598.5" y="178.5" fill="#00ffff" font-size="5.88" text-anchor="start" fill-opacity="0.66" letter-spacing="0.35" font-family="'Liberation Sans','Noto Sans CJK SC',sans-serif">900×5</text>
<text x="754.5" y="178.5" fill="#00ffff" font-size="5.88" text-anchor="start" fill-opacity="0.66" letter-spacing="0.35" font-family="'Liberation Sans','Noto Sans CJK SC',sans-serif">850</text>
<text x="798.5" y="178.5" fill="#00ffff" font-size="5.88" text-anchor="start" fill-opacity="0.66" letter-spacing="0.35" font-family="'Liberation Sans','Noto Sans CJK SC',sans-serif">150</text>
<text x="378" y="186" fill="#00ffff" font-size="5.88" text-anchor="start" fill-opacity="0.66" letter-spacing="0.35" font-family="'Liberation Sans','Noto Sans CJK SC',sans-serif">63</text>
<path d="M378 187.5H387" stroke="#00ffff" stroke-width="1" fill="none" shape-rendering="crispEdges"/>
<path d="M387 187.5L390.5 196.5M390.5 196.5L395 196.5" stroke="#00ffff" stroke-width="1" fill="none"/>
<path d="M419 195.5H798M393 238.5H798" stroke="#00ff00" stroke-width="1" fill="none" shape-rendering="crispEdges"/>
<path d="M419 239.5H798" stroke="#00ff00" stroke-width="1" fill="none" shape-rendering="crispEdges"/>
<path d="M427 197.5H797M420 236.5H797" stroke="#ffffff" stroke-width="1" fill="none" shape-rendering="crispEdges"/>
<path d="M432 197.500H797M432 236.500H797" stroke="#ff0000" stroke-width="1" stroke-dasharray="3 16" shape-rendering="crispEdges" stroke-opacity="0.900"/>
<path d="M389 216.500H800" stroke="#ff0000" stroke-width="1" stroke-dasharray="34 3 3 3" shape-rendering="crispEdges"/>
<path d="M392.500 195.500H418.500V238.500H392.500Z M395.500 198.500H416.500V235.500H395.500Z" stroke="#ffff00" stroke-width="1" fill="none" shape-rendering="crispEdges"/>
<path d="M421.5 195V239" stroke="#00ff00" stroke-width="1" fill="none" shape-rendering="crispEdges"/>
<path d="M424.5 197V237M426.5 200V237" stroke="#ffff00" stroke-width="1" fill="none" shape-rendering="crispEdges"/>
<path d="M446.5 188V242" stroke="#ff0000" stroke-width="1" fill="none" shape-rendering="crispEdges"/>
<path d="M465.5 193V244" stroke="#ff0000" stroke-width="1" fill="none" shape-rendering="crispEdges"/>
<path d="M529.5 193V244" stroke="#ff0000" stroke-width="1" fill="none" shape-rendering="crispEdges"/>
<path d="M580.5 193V244" stroke="#ff0000" stroke-width="1" fill="none" shape-rendering="crispEdges"/>
<path d="M631.5 193V244" stroke="#ff0000" stroke-width="1" fill="none" shape-rendering="crispEdges"/>
<path d="M682.5 193V244" stroke="#ff0000" stroke-width="1" fill="none" shape-rendering="crispEdges"/>
<path d="M733.5 193V244" stroke="#ff0000" stroke-width="1" fill="none" shape-rendering="crispEdges"/>
<path d="M788.5 183V244" stroke="#ff0000" stroke-width="1" fill="none" shape-rendering="crispEdges"/>
<path d="M479.5 197V237" stroke="#ffffff" stroke-width="1" fill="none" shape-rendering="crispEdges"/>
<path d="M528.5 197V237" stroke="#ffffff" stroke-width="1" fill="none" shape-rendering="crispEdges"/>
<path d="M579.5 197V237" stroke="#ffffff" stroke-width="1" fill="none" shape-rendering="crispEdges"/>
<path d="M630.5 197V237" stroke="#ffffff" stroke-width="1" fill="none" shape-rendering="crispEdges"/>
<path d="M681.5 197V237" stroke="#ffffff" stroke-width="1" fill="none" shape-rendering="crispEdges"/>
<path d="M732.5 197V237" stroke="#ffffff" stroke-width="1" fill="none" shape-rendering="crispEdges"/>
<path d="M427.5 193V241" stroke="#ff0000" stroke-width="1" fill="none" shape-rendering="crispEdges"/>
<path d="M441.5 197V237M464.5 197V237" stroke="#00ff00" stroke-width="1" fill="none" shape-rendering="crispEdges"/>
<path d="M443.5 199V236" stroke="#00ffff" stroke-width="1" fill="none" shape-rendering="crispEdges"/>
<path d="M486.5 198V236M489.0 198V236" stroke="#ffff00" stroke-width="1" fill="none" shape-rendering="crispEdges"/>
<path d="M549.5 198V236M552.0 198V236" stroke="#ffff00" stroke-width="1" fill="none" shape-rendering="crispEdges"/>
<path d="M640.5 198V236M643.0 198V236" stroke="#ffff00" stroke-width="1" fill="none" shape-rendering="crispEdges"/>
<path d="M704.5 198V236M707.0 198V236" stroke="#ffff00" stroke-width="1" fill="none" shape-rendering="crispEdges"/>
<path d="M767.5 198V236M770.0 198V236" stroke="#ffff00" stroke-width="1" fill="none" shape-rendering="crispEdges"/>
<path d="M791.5 198V236M794.0 198V236" stroke="#ffff00" stroke-width="1" fill="none" shape-rendering="crispEdges"/>
<path d="M758.5 197V237" stroke="#00ffff" stroke-width="1" fill="none" shape-rendering="crispEdges"/>
<path d="M448.0 194V198M448.0 236V240M444.0 194V198M444.0 236V240" stroke="#00ff00" stroke-width="1" fill="none" shape-rendering="crispEdges"/>
<path d="M467.0 194V198M467.0 236V240M463.0 194V198M463.0 236V240" stroke="#00ff00" stroke-width="1" fill="none" shape-rendering="crispEdges"/>
<path d="M480.0 194V198M480.0 236V240M476.0 194V198M476.0 236V240" stroke="#00ff00" stroke-width="1" fill="none" shape-rendering="crispEdges"/>
<path d="M531.0 194V198M531.0 236V240M527.0 194V198M527.0 236V240" stroke="#00ff00" stroke-width="1" fill="none" shape-rendering="crispEdges"/>
<path d="M582.0 194V198M582.0 236V240M578.0 194V198M578.0 236V240" stroke="#00ff00" stroke-width="1" fill="none" shape-rendering="crispEdges"/>
<path d="M633.0 194V198M633.0 236V240M629.0 194V198M629.0 236V240" stroke="#00ff00" stroke-width="1" fill="none" shape-rendering="crispEdges"/>
<path d="M684.0 194V198M684.0 236V240M680.0 194V198M680.0 236V240" stroke="#00ff00" stroke-width="1" fill="none" shape-rendering="crispEdges"/>
<path d="M735.0 194V198M735.0 236V240M731.0 194V198M731.0 236V240" stroke="#00ff00" stroke-width="1" fill="none" shape-rendering="crispEdges"/>
<circle cx="427.5" cy="196.5" r="5" fill="none" stroke="#ffffff" stroke-width="1.300"/>
<circle cx="529.5" cy="217" r="5.300" fill="none" stroke="#ffffff" stroke-width="1.300"/>
<circle cx="631.5" cy="196.5" r="3.500" fill="#ffffff" stroke="#ffffff" stroke-width="1"/>
<path d="M631.5 193V200" stroke="#ff0000" stroke-width="1" fill="none" shape-rendering="crispEdges"/>
<circle cx="788.5" cy="196" r="6" fill="none" stroke="#ffffff" stroke-width="1.300"/>
<rect x="785" y="194" width="4" height="4" fill="#ffffff" fill-opacity="0.800"/>
<rect x="530" y="214" width="3" height="5" fill="#ffffff" fill-opacity="0.800"/>
<path d="M428 200.5L487 234.5M430 198.5L489 232.5" stroke="#ffff00" stroke-width="1" fill="none"/>
<path d="M423.5 205L482 239.5M423.5 205L428 198M482 239.5L486 233" stroke="#00ffff" stroke-width="1" fill="none"/>
<path d="M706 232.5L768 198.5M704.5 230L766.5 196M704.5 230L706 232.5" stroke="#ffff00" stroke-width="1" fill="none"/>
<path d="M702.5 226.5L764 193M702.5 226.5L705 231.5M764 193L768 197" stroke="#00ffff" stroke-width="1" fill="none"/>
<text x="455" y="226" fill="#00ffff" font-size="5.46" text-anchor="start" fill-opacity="0.7" letter-spacing="0.35" font-family="'Liberation Sans','Noto Sans CJK SC',sans-serif" transform="rotate(30 455 226)">747</text>
<text x="724" y="212" fill="#00ffff" font-size="5.46" text-anchor="start" fill-opacity="0.7" letter-spacing="0.35" font-family="'Liberation Sans','Noto Sans CJK SC',sans-serif" transform="rotate(-29 724 212)">717</text>
<text x="432" y="222" fill="#00ffff" font-size="5.88" text-anchor="start" fill-opacity="0.66" letter-spacing="0.35" font-family="'Liberation Sans','Noto Sans CJK SC',sans-serif">30</text>
<path d="M431 222.5H447" stroke="#00ffff" stroke-width="1" fill="none" shape-rendering="crispEdges"/>
<text x="490" y="208.5" fill="#00ffff" font-size="5.88" text-anchor="start" fill-opacity="0.66" letter-spacing="0.35" font-family="'Liberation Sans','Noto Sans CJK SC',sans-serif">40</text>
<path d="M484 209.5H499" stroke="#00ffff" stroke-width="1" fill="none" shape-rendering="crispEdges"/>
<text x="621" y="210" fill="#00ffff" font-size="5.88" text-anchor="start" fill-opacity="0.66" letter-spacing="0.35" font-family="'Liberation Sans','Noto Sans CJK SC',sans-serif">40</text>
<path d="M620 210.5H637" stroke="#00ffff" stroke-width="1" fill="none" shape-rendering="crispEdges"/>
<path d="M427 248.5H447M427.5 239V249M446.5 239V249M478 248.5H530M529.5 239V249" stroke="#00ffff" stroke-width="1" fill="none" shape-rendering="crispEdges"/>
<text x="431" y="247.5" fill="#00ffff" font-size="5.88" text-anchor="start" fill-opacity="0.66" letter-spacing="0.35" font-family="'Liberation Sans','Noto Sans CJK SC',sans-serif">300</text>
<text x="498" y="247.5" fill="#00ffff" font-size="5.88" text-anchor="start" fill-opacity="0.66" letter-spacing="0.35" font-family="'Liberation Sans','Noto Sans CJK SC',sans-serif">800</text>
<path d="M392 258.5H798M392.5 239V259M797.5 239V259" stroke="#00ffff" stroke-width="1" fill="none" shape-rendering="crispEdges"/>
<text x="587" y="257.5" fill="#00ffff" font-size="6.3" text-anchor="start" fill-opacity="0.66" letter-spacing="0.35" font-family="'Liberation Sans','Noto Sans CJK SC',sans-serif">6350</text>
<path d="M805.5 196V238M797 196.5H806M797 237.5H806M813.5 194V239M797 194.5H814M797 238.5H814" stroke="#00ffff" stroke-width="1" fill="none" shape-rendering="crispEdges"/>
<text x="803.5" y="224" fill="#00ffff" font-size="5.88" text-anchor="start" fill-opacity="0.66" letter-spacing="0.35" font-family="'Liberation Sans','Noto Sans CJK SC',sans-serif" transform="rotate(-90 803.5 224)">640</text>
<text x="811.5" y="224" fill="#00ffff" font-size="5.88" text-anchor="start" fill-opacity="0.66" letter-spacing="0.35" font-family="'Liberation Sans','Noto Sans CJK SC',sans-serif" transform="rotate(-90 811.5 224)">686</text>
<text x="756.5" y="224" fill="#00ffff" font-size="5.88" text-anchor="start" fill-opacity="0.66" letter-spacing="0.35" font-family="'Liberation Sans','Noto Sans CJK SC',sans-serif" transform="rotate(-90 756.5 224)">686</text>
<rect x="782" y="236" width="4" height="3" fill="#ffff00"/><rect x="790" y="236" width="4" height="3" fill="#ffff00"/>
<text x="431" y="278" fill="#00ffff" font-size="7.3" text-anchor="start" fill-opacity="0.8" font-family="'Liberation Sans','Noto Sans CJK SC',sans-serif" textLength="40" lengthAdjust="spacingAndGlyphs">A向 放大1: 5</text>
<path d="M371 287.5H546M371.5 287V351M545.5 287V307" stroke="#00ffff" stroke-width="1" fill="none" shape-rendering="crispEdges"/>
<text x="452.5" y="286.5" fill="#00ffff" font-size="5.88" text-anchor="start" fill-opacity="0.66" letter-spacing="0.35" font-family="'Liberation Sans','Noto Sans CJK SC',sans-serif">686</text>
<path d="M383 384.5H534M383.5 364V385M533.5 364V385" stroke="#00ffff" stroke-width="1" fill="none" shape-rendering="crispEdges"/>
<text x="452" y="383.5" fill="#00ffff" font-size="5.88" text-anchor="start" fill-opacity="0.66" letter-spacing="0.35" font-family="'Liberation Sans','Noto Sans CJK SC',sans-serif">586</text>
<path d="M458.5 304V380" stroke="#ff0000" stroke-width="1" fill="none" shape-rendering="crispEdges"/>
<path d="M372 338.5H546M383 363.5H534M383.5 338V364M533.5 338V364" stroke="#ffffff" stroke-width="1" fill="none" shape-rendering="crispEdges"/>
<path d="M400.500 338.500H533M400.500 363.500H533" stroke="#000" stroke-width="1" stroke-dasharray="1.500 17.600" shape-rendering="crispEdges"/>
<path d="M384 364.5H533" stroke="#00ff00" stroke-width="1" fill="none" shape-rendering="crispEdges"/>
<path d="M383 347.5H534M383 354.5H534" stroke="#00ff00" stroke-width="1" fill="none" shape-rendering="crispEdges"/>
<path d="M371 300.5H384M376.5 300V314M383.5 300V338M363 306.5H398M363.5 306V338M363 337.5H372M398.5 306V326M383 316.5H399M383 325.5H399M371 350.5H384M367 372.5H384M383.5 364V373" stroke="#00ffff" stroke-width="1" fill="none" shape-rendering="crispEdges"/>
<path d="M372.5 306V338M372 318.5H384M383.5 306V338M372 334.5H384" stroke="#ffffff" stroke-width="1" fill="none" shape-rendering="crispEdges"/>
<path d="M371.5 306V338" stroke="#00ff00" stroke-width="1" fill="none" shape-rendering="crispEdges"/>
<path d="M367.5 338V373M367 364.5H384" stroke="#00ff00" stroke-width="1" fill="none" shape-rendering="crispEdges"/>
<text x="389" y="299.5" fill="#00ffff" font-size="5.88" text-anchor="start" fill-opacity="0.66" letter-spacing="0.35" font-family="'Liberation Sans','Noto Sans CJK SC',sans-serif">25</text>
<text x="362" y="331" fill="#00ffff" font-size="5.46" text-anchor="start" fill-opacity="0.66" letter-spacing="0.35" font-family="'Liberation Sans','Noto Sans CJK SC',sans-serif" transform="rotate(-90 362 331)">121</text>
<text x="397" y="325" fill="#00ffff" font-size="5.04" text-anchor="start" fill-opacity="0.75" letter-spacing="0.35" font-family="'Liberation Sans','Noto Sans CJK SC',sans-serif" transform="rotate(-90 397 325)">70.5</text>
<text x="388" y="331" fill="#00ffff" font-size="4.62" text-anchor="start" fill-opacity="0.7" letter-spacing="0.35" font-family="'Liberation Sans','Noto Sans CJK SC',sans-serif" transform="rotate(-90 388 331)">15</text>
<text x="373" y="352.5" fill="#00ffff" font-size="5.88" text-anchor="start" fill-opacity="0.66" letter-spacing="0.35" font-family="'Liberation Sans','Noto Sans CJK SC',sans-serif">50</text>
<text x="372" y="371.5" fill="#00ffff" font-size="5.88" text-anchor="start" fill-opacity="0.66" letter-spacing="0.35" font-family="'Liberation Sans','Noto Sans CJK SC',sans-serif">63</text>
<circle cx="376.500" cy="324.500" r="2.500" fill="none" stroke="#00ff00" stroke-width="1"/>
<circle cx="376.500" cy="324.500" r="1.400" fill="none" stroke="#ff0000" stroke-width="1"/>
<path d="M371 324.5H380M376.5 320V329" stroke="#ff0000" stroke-width="1" fill="none" shape-rendering="crispEdges"/>
<rect x="375" y="311" width="2.500" height="2.500" fill="#00ff00"/><rect x="375" y="333" width="2.500" height="2.500" fill="#00ff00"/>
<path d="M375 331L404 296.5" stroke="#00ffff" stroke-width="1" fill="none"/>
<path d="M404 296.5H423" stroke="#00ffff" stroke-width="1" fill="none" shape-rendering="crispEdges"/>
<text x="404.5" y="295.5" fill="#00ffff" font-size="5.88" text-anchor="start" fill-opacity="0.66" letter-spacing="0.35" font-family="'Liberation Sans','Noto Sans CJK SC',sans-serif">2-φ22</text>
<path d="M389 333L399 329.5" stroke="#00ffff" stroke-width="1" fill="none"/>
<path d="M399 329.5H426" stroke="#00ffff" stroke-width="1" fill="none" shape-rendering="crispEdges"/>
<text x="409" y="328.5" fill="#00ffff" font-size="5.88" text-anchor="start" fill-opacity="0.66" letter-spacing="0.35" font-family="'Liberation Sans','Noto Sans CJK SC',sans-serif">4-M8</text>
<path d="M422.5 338V348M413 338.5H423M413 347.5H423" stroke="#00ffff" stroke-width="1" fill="none" shape-rendering="crispEdges"/>
<text x="421" y="346.5" fill="#00ffff" font-size="5.04" text-anchor="start" fill-opacity="0.7" letter-spacing="0.35" font-family="'Liberation Sans','Noto Sans CJK SC',sans-serif" transform="rotate(-90 421 346.5)">40</text>
<path d="M409.5 354V364M409 354.5H416M409 363.5H416" stroke="#00ffff" stroke-width="1" fill="none" shape-rendering="crispEdges"/>
<text x="408" y="363" fill="#00ffff" font-size="5.04" text-anchor="start" fill-opacity="0.7" letter-spacing="0.35" font-family="'Liberation Sans','Noto Sans CJK SC',sans-serif" transform="rotate(-90 408 363)">10</text>
<path d="M533 300.5H546M524 306.5H568M567.5 306V364M549 363.5H568M524.5 306V317M524 316.5H555M554.5 316V335M516 331.5H555M516 334.5H555M516.5 324V338M557.5 325V353M557 352.5H568M533.5 364V385" stroke="#00ffff" stroke-width="1" fill="none" shape-rendering="crispEdges"/>
<path d="M533.5 300V338M549.5 338V364" stroke="#00ff00" stroke-width="1" fill="none" shape-rendering="crispEdges"/>
<path d="M545.5 306V339M534 316.5H546M534 328.5H546" stroke="#ffffff" stroke-width="1" fill="none" shape-rendering="crispEdges"/>
<text x="536" y="299.5" fill="#00ffff" font-size="5.88" text-anchor="start" fill-opacity="0.66" letter-spacing="0.35" font-family="'Liberation Sans','Noto Sans CJK SC',sans-serif">50</text>
<text x="523" y="316" fill="#00ffff" font-size="5.04" text-anchor="start" fill-opacity="0.75" letter-spacing="0.35" font-family="'Liberation Sans','Noto Sans CJK SC',sans-serif" transform="rotate(-90 523 316)">40</text>
<text x="553" y="331" fill="#00ffff" font-size="5.04" text-anchor="start" fill-opacity="0.75" letter-spacing="0.35" font-family="'Liberation Sans','Noto Sans CJK SC',sans-serif" transform="rotate(-90 553 331)">80</text>
<text x="565.5" y="346" fill="#00ffff" font-size="5.88" text-anchor="start" fill-opacity="0.66" letter-spacing="0.35" font-family="'Liberation Sans','Noto Sans CJK SC',sans-serif" transform="rotate(-90 565.5 346)">230</text>
<text x="560.5" y="352" fill="#00ffff" font-size="5.04" text-anchor="start" fill-opacity="0.75" letter-spacing="0.35" font-family="'Liberation Sans','Noto Sans CJK SC',sans-serif">20</text>
<text x="516.5" y="325" fill="#00ffff" font-size="5.04" text-anchor="start" fill-opacity="0.7" letter-spacing="0.35" font-family="'Liberation Sans','Noto Sans CJK SC',sans-serif">4</text>
<text x="523.5" y="330.5" fill="#00ffff" font-size="5.46" text-anchor="start" fill-opacity="0.66" letter-spacing="0.35" font-family="'Liberation Sans','Noto Sans CJK SC',sans-serif">40</text>
<circle cx="539.500" cy="324" r="2.800" fill="none" stroke="#ff0000" stroke-width="1.100"/>
<path d="M534 324.5H546M539.5 318V330" stroke="#ff0000" stroke-width="1" fill="none" shape-rendering="crispEdges"/>
<rect x="538" y="312" width="2.500" height="2.500" fill="#00ff00"/><rect x="538" y="332.500" width="2.500" height="2.500" fill="#00ff00"/>
<text x="570.5" y="272.5" fill="#00ffff" font-size="7.3" text-anchor="start" fill-opacity="0.8" font-family="'Liberation Sans','Noto Sans CJK SC',sans-serif" textLength="32" lengthAdjust="spacingAndGlyphs">A放大1: 5</text>
<text x="624" y="272.5" fill="#00ffff" font-size="7.3" text-anchor="start" fill-opacity="0.8" font-family="'Liberation Sans','Noto Sans CJK SC',sans-serif" textLength="32" lengthAdjust="spacingAndGlyphs">B放大1: 5</text>
<text x="666" y="272.5" fill="#00ffff" font-size="7.3" text-anchor="start" fill-opacity="0.8" font-family="'Liberation Sans','Noto Sans CJK SC',sans-serif" textLength="32" lengthAdjust="spacingAndGlyphs">C放大1: 5</text>
<text x="723.5" y="272.5" fill="#00ffff" font-size="7.3" text-anchor="start" fill-opacity="0.8" font-family="'Liberation Sans','Noto Sans CJK SC',sans-serif" textLength="32" lengthAdjust="spacingAndGlyphs">D放大1: 5</text>
<text x="789" y="272.5" fill="#00ffff" font-size="7.3" text-anchor="start" fill-opacity="0.8" font-family="'Liberation Sans','Noto Sans CJK SC',sans-serif" textLength="32" lengthAdjust="spacingAndGlyphs">E放大1: 5</text>
<path d="M579 283.5H595M579.5 283V299M594.5 283V299M561 286.5H570M561.5 286V307M561 293.5H569M561 299.5H572M620.5 293V307M604 293.5H621M600 306.5H621M603.5 290V308M607 312.5H614" stroke="#00ffff" stroke-width="1" fill="none" shape-rendering="crispEdges"/>
<path d="M603.5 304L607 312.5M590 301L586 316M586 316L580 316" stroke="#00ffff" stroke-width="1" fill="none"/>
<text x="583" y="282.5" fill="#00ffff" font-size="5.88" text-anchor="start" fill-opacity="0.66" letter-spacing="0.35" font-family="'Liberation Sans','Noto Sans CJK SC',sans-serif">60</text>
<text x="562" y="285.5" fill="#00ffff" font-size="5.88" text-anchor="start" fill-opacity="0.66" letter-spacing="0.35" font-family="'Liberation Sans','Noto Sans CJK SC',sans-serif">23</text>
<text x="580" y="316" fill="#00ffff" font-size="5.88" text-anchor="start" fill-opacity="0.75" letter-spacing="0.35" font-family="'Liberation Sans','Noto Sans CJK SC',sans-serif">87</text>
<text x="609" y="311.5" fill="#00ffff" font-size="5.88" text-anchor="start" fill-opacity="0.75" letter-spacing="0.35" font-family="'Liberation Sans','Noto Sans CJK SC',sans-serif">4</text>
<text x="618.5" y="305" fill="#00ffff" font-size="5.46" text-anchor="start" fill-opacity="0.66" letter-spacing="0.35" font-family="'Liberation Sans','Noto Sans CJK SC',sans-serif" transform="rotate(-90 618.5 305)">60</text>
<path d="M568.500 294L569.500 296.500V305.500H586" stroke="#ffffff" stroke-width="1" fill="none"/>
<path d="M604.500 294.500Q609 300 604.500 305" stroke="#ffffff" fill="none" stroke-width="1"/>
<path d="M586 305.5H603" stroke="#00ff00" stroke-width="1" fill="none" shape-rendering="crispEdges"/>
<path d="M573 293.5H602" stroke="#00ff00" stroke-width="1" fill="none" shape-rendering="crispEdges"/>
<path d="M572 299.5H603M579.5 299V310M594.5 299V310" stroke="#ff0000" stroke-width="1" fill="none" shape-rendering="crispEdges"/>
<rect x="575.5" y="297.500" width="8" height="3.500" rx="1.700" fill="none" stroke="#00ff00" stroke-width="1.100"/>
<rect x="577.0" y="298.500" width="5" height="1.800" fill="#ff0000"/>
<rect x="590.5" y="297.500" width="8" height="3.500" rx="1.700" fill="none" stroke="#00ff00" stroke-width="1.100"/>
<rect x="592.0" y="298.500" width="5" height="1.800" fill="#ff0000"/>
<rect x="632.500" y="277.500" width="9" height="48" rx="1.500" fill="none" stroke="#ffffff" stroke-width="1"/>
<path d="M633.5 279V324M640.5 279V324" stroke="#00ff00" stroke-width="1" fill="none" shape-rendering="crispEdges"/>
<path d="M636.500 278V323" stroke="#ff0000" stroke-width="1" stroke-dasharray="7 2 2 2" shape-rendering="crispEdges"/>
<path d="M629 301.5H644" stroke="#ff0000" stroke-width="1" fill="none" shape-rendering="crispEdges"/>
<circle cx="636.500" cy="286" r="1.800" fill="none" stroke="#00ff00" stroke-width="1.100"/>
<circle cx="636.500" cy="316.5" r="1.800" fill="none" stroke="#00ff00" stroke-width="1.100"/>
<path d="M617 283.5H642M638 286.5H654M638 316.5H654M653.5 286V317M647 327.5H668M632 337.5H642M632.5 326V340M641.5 326V340" stroke="#00ffff" stroke-width="1" fill="none" shape-rendering="crispEdges"/>
<path d="M647 327.5L631 310" stroke="#00ffff" stroke-width="1" fill="none"/>
<text x="618" y="282.5" fill="#00ffff" font-size="5.88" text-anchor="start" fill-opacity="0.66" letter-spacing="0.35" font-family="'Liberation Sans','Noto Sans CJK SC',sans-serif">20</text>
<text x="651.5" y="309" fill="#00ffff" font-size="5.88" text-anchor="start" fill-opacity="0.66" letter-spacing="0.35" font-family="'Liberation Sans','Noto Sans CJK SC',sans-serif" transform="rotate(-90 651.5 309)">150</text>
<text x="648" y="326.5" fill="#00ffff" font-size="5.88" text-anchor="start" fill-opacity="0.66" letter-spacing="0.35" font-family="'Liberation Sans','Noto Sans CJK SC',sans-serif">2-φ11</text>
<text x="633.5" y="336.5" fill="#00ffff" font-size="5.88" text-anchor="start" fill-opacity="0.66" letter-spacing="0.35" font-family="'Liberation Sans','Noto Sans CJK SC',sans-serif">40</text>
<path d="M662.5 297V311M662 297.5H711M662 310.5H675M676 294.5H701M683.5 294V304M686.5 294V304M710 291.5H718M710.5 291V311M702 303.5H711M699 321.5H715" stroke="#00ffff" stroke-width="1" fill="none" shape-rendering="crispEdges"/>
<path d="M686 304.5L699 321.5" stroke="#00ffff" stroke-width="1" fill="none"/>
<text x="660.5" y="309" fill="#00ffff" font-size="5.46" text-anchor="start" fill-opacity="0.66" letter-spacing="0.35" font-family="'Liberation Sans','Noto Sans CJK SC',sans-serif" transform="rotate(-90 660.5 309)">60</text>
<text x="692" y="293.5" fill="#00ffff" font-size="5.88" text-anchor="start" fill-opacity="0.66" letter-spacing="0.35" font-family="'Liberation Sans','Noto Sans CJK SC',sans-serif">14</text>
<text x="711" y="290.5" fill="#00ffff" font-size="5.88" text-anchor="start" fill-opacity="0.66" letter-spacing="0.35" font-family="'Liberation Sans','Noto Sans CJK SC',sans-serif">23</text>
<text x="699.5" y="320.5" fill="#00ffff" font-size="5.88" text-anchor="start" fill-opacity="0.66" letter-spacing="0.35" font-family="'Liberation Sans','Noto Sans CJK SC',sans-serif">Φ6.5</text>
<path d="M668.500 298L671 309.500H699.500L702 298" stroke="#ffffff" stroke-width="1" fill="none"/>
<path d="M674 297.5H701M674 310.5H700" stroke="#00ff00" stroke-width="1" fill="none" shape-rendering="crispEdges"/>
<path d="M669 303.5H702M684.5 300V307" stroke="#ff0000" stroke-width="1" fill="none" shape-rendering="crispEdges"/>
<ellipse cx="684.500" cy="303.500" rx="3.800" ry="2.500" fill="none" stroke="#00ff00" stroke-width="1.200"/>
<rect x="683" y="302.500" width="3.500" height="2" fill="#ff0000"/>
<path d="M722 296.5H731M722.5 296V317M730 293.5H762M730.5 293V321M761.5 293V309M737 300.5H747M722 320.5H747M728.5 308V321M732.5 308V321M768 302.5H782M781.5 302V316M724 315.5H782M768.5 302V316" stroke="#00ffff" stroke-width="1" fill="none" shape-rendering="crispEdges"/>
<path d="M737.5 300.5L731.5 308.5" stroke="#00ffff" stroke-width="1" fill="none"/>
<text x="722" y="295.5" fill="#00ffff" font-size="5.88" text-anchor="start" fill-opacity="0.66" letter-spacing="0.35" font-family="'Liberation Sans','Noto Sans CJK SC',sans-serif">23</text>
<text x="740" y="292.5" fill="#00ffff" font-size="5.88" text-anchor="start" fill-opacity="0.66" letter-spacing="0.35" font-family="'Liberation Sans','Noto Sans CJK SC',sans-serif">120</text>
<text x="738" y="299.5" fill="#00ffff" font-size="5.88" text-anchor="start" fill-opacity="0.75" letter-spacing="0.35" font-family="'Liberation Sans','Noto Sans CJK SC',sans-serif">87</text>
<text x="738" y="319.5" fill="#00ffff" font-size="5.88" text-anchor="start" fill-opacity="0.75" letter-spacing="0.35" font-family="'Liberation Sans','Noto Sans CJK SC',sans-serif">14</text>
<text x="779.5" y="314" fill="#00ffff" font-size="5.46" text-anchor="start" fill-opacity="0.66" letter-spacing="0.35" font-family="'Liberation Sans','Noto Sans CJK SC',sans-serif" transform="rotate(-90 779.5 314)">60</text>
<path d="M724 302.5H770" stroke="#00ff00" stroke-width="1" fill="none" shape-rendering="crispEdges"/>
<path d="M725 314.5H767" stroke="#ffffff" stroke-width="1" fill="none" shape-rendering="crispEdges"/>
<path d="M723.500 303Q721 309 725.500 314.500M767 314.500Q771.500 309 769 303" stroke="#ffffff" fill="none" stroke-width="1"/>
<path d="M717 308.500H775" stroke="#ff0000" stroke-width="1" stroke-dasharray="24 8" shape-rendering="crispEdges"/>
<path d="M745.5 301V317M730.5 305V312M761.5 305V312" stroke="#ff0000" stroke-width="1" fill="none" shape-rendering="crispEdges"/>
<ellipse cx="730.5" cy="308.500" rx="3.600" ry="2.600" fill="none" stroke="#00ff00" stroke-width="1.200"/>
<ellipse cx="761.5" cy="308.500" rx="3.600" ry="2.600" fill="none" stroke="#00ff00" stroke-width="1.200"/>
<path d="M792 298.5H799M792.5 298V324M798 297.5H815M798.5 297V324M814.5 297V321M787 304.5H838M787.5 304V313M825 317.5H838M837.5 304V318M790 323.5H813M821 326.5H838" stroke="#00ffff" stroke-width="1" fill="none" shape-rendering="crispEdges"/>
<path d="M802 312L821 326.5" stroke="#00ffff" stroke-width="1" fill="none"/>
<text x="792" y="297.5" fill="#00ffff" font-size="5.88" text-anchor="start" fill-opacity="0.66" letter-spacing="0.35" font-family="'Liberation Sans','Noto Sans CJK SC',sans-serif">25</text>
<text x="802" y="296.5" fill="#00ffff" font-size="5.88" text-anchor="start" fill-opacity="0.66" letter-spacing="0.35" font-family="'Liberation Sans','Noto Sans CJK SC',sans-serif">60</text>
<text x="806" y="322.5" fill="#00ffff" font-size="5.88" text-anchor="start" fill-opacity="0.75" letter-spacing="0.35" font-family="'Liberation Sans','Noto Sans CJK SC',sans-serif">18</text>
<text x="822" y="325.5" fill="#00ffff" font-size="5.88" text-anchor="start" fill-opacity="0.66" letter-spacing="0.35" font-family="'Liberation Sans','Noto Sans CJK SC',sans-serif">Φ6.5</text>
<text x="835.5" y="316" fill="#00ffff" font-size="5.46" text-anchor="start" fill-opacity="0.66" letter-spacing="0.35" font-family="'Liberation Sans','Noto Sans CJK SC',sans-serif" transform="rotate(-90 835.5 316)">60</text>
<path d="M789 305.5H826M792 317.5H826" stroke="#00ff00" stroke-width="1" fill="none" shape-rendering="crispEdges"/>
<path d="M788.500 305V312.500L793 317.500M826.500 305Q823 311 826.500 317.500" stroke="#ffffff" fill="none" stroke-width="1"/>
<path d="M795 311.5H826M798.5 311V323M814.5 311V323" stroke="#ff0000" stroke-width="1" fill="none" shape-rendering="crispEdges"/>
<rect x="795.0" y="309.500" width="7" height="3.500" rx="1.200" fill="none" stroke="#00ff00" stroke-width="1.100"/>
<rect x="796.5" y="310.500" width="4" height="1.600" fill="#ff0000"/>
<rect x="810.0" y="309.500" width="7" height="3.500" rx="1.200" fill="none" stroke="#00ff00" stroke-width="1.100"/>
<rect x="811.5" y="310.500" width="4" height="1.600" fill="#ff0000"/>
<path d="M618 345.5H848M618.5 345V408M618 366.5H848M618 376.5H744M618 387.5H848M618 397.5H848M647.5 366V408M681.5 366V408M710.5 366V408M744.5 345V408M744 356.5H848M767.5 345V367M767.5 387V408M796.5 356V367M819.5 356V367M819.5 387V408" stroke="#ffffff" stroke-width="1" fill="none" shape-rendering="crispEdges"/>
<text x="623.5" y="360.5" fill="#c818d8" font-size="6.9" text-anchor="start" fill-opacity="0.85" font-family="'Liberation Sans','Noto Sans CJK SC',sans-serif" textLength="115" lengthAdjust="spacing">宁夏精盛输送机械制造有限责任公司</text>
<text x="620" y="375" fill="#c818d8" font-size="5" text-anchor="start" fill-opacity="0.8" font-family="'Liberation Sans','Noto Sans CJK SC',sans-serif">设　计</text>
<text x="620" y="385" fill="#c818d8" font-size="5" text-anchor="start" fill-opacity="0.8" font-family="'Liberation Sans','Noto Sans CJK SC',sans-serif">制　图</text>
<text x="684" y="375" fill="#c818d8" font-size="5" text-anchor="start" fill-opacity="0.8" font-family="'Liberation Sans','Noto Sans CJK SC',sans-serif">天　哲</text>
<text x="684" y="386" fill="#c818d8" font-size="5" text-anchor="start" fill-opacity="0.8" font-family="'Liberation Sans','Noto Sans CJK SC',sans-serif">邵　杨</text>
<text x="682.5" y="406" fill="#c818d8" font-size="5" text-anchor="start" fill-opacity="0.8" font-family="'Liberation Sans','Noto Sans CJK SC',sans-serif">设计主持人</text>
<text x="745.5" y="353" fill="#c818d8" font-size="5" text-anchor="start" fill-opacity="0.8" font-family="'Liberation Sans','Noto Sans CJK SC',sans-serif">项目名称</text>
<text x="748" y="405" fill="#c818d8" font-size="5" text-anchor="start" fill-opacity="0.8" font-family="'Liberation Sans','Noto Sans CJK SC',sans-serif">图号</text>
<text x="828" y="364.5" fill="#c818d8" font-size="5" text-anchor="start" fill-opacity="0.8" font-family="'Liberation Sans','Noto Sans CJK SC',sans-serif">1：20</text>
<rect x="620" y="391" width="17" height="5" fill="#ff00ff"/>
<rect x="619" y="401" width="26" height="5" fill="#ff00ff"/>
<rect x="684" y="391" width="16" height="5" fill="#ff00ff"/>
<rect x="747" y="359" width="11" height="5" fill="#ff00ff"/>
<rect x="798" y="360" width="11" height="5" fill="#ff00ff"/>
<rect x="748" y="391" width="11" height="5" fill="#ff00ff"/>
<rect x="821" y="391" width="17" height="5" fill="#ff00ff"/>
<rect x="822" y="401" width="16" height="5" fill="#ff00ff"/>
</svg>
</body>
</html>
